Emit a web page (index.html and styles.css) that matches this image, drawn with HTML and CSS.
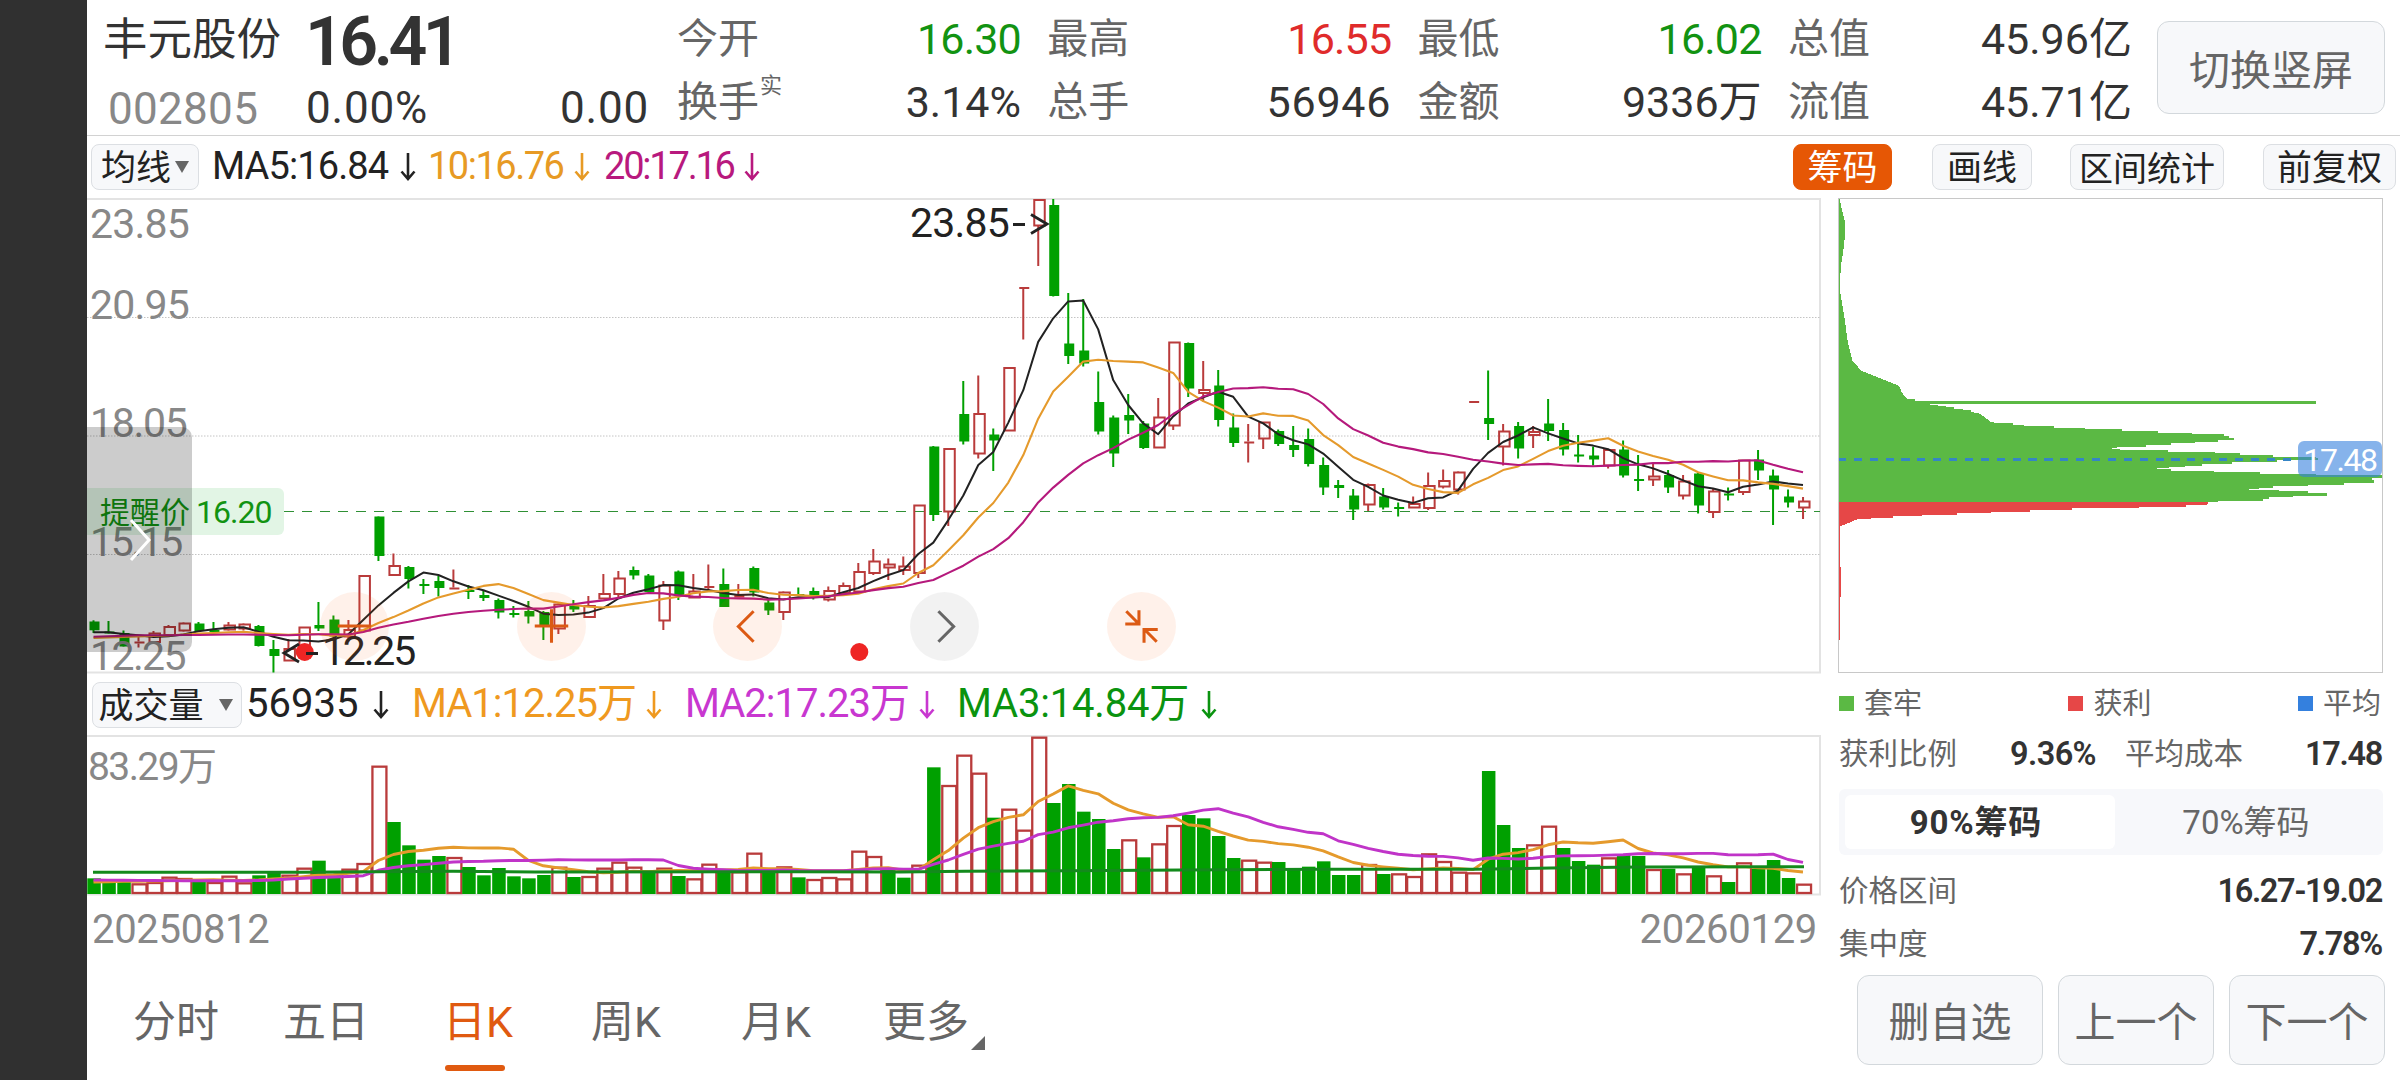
FILE: index.html
```html
<!DOCTYPE html>
<html lang="zh-CN">
<head>
    <meta charset="UTF-8">
    <meta name="viewport" content="width=device-width, initial-scale=1.0">
    <title>丰元股份 002805</title>
    <link rel="stylesheet" href="styles.css">
</head>
<body>
    <svg class="defs" width="0" height="0">
        <symbol id="down" viewBox="0 0 16 28"><path d="M8 0V26M1.5 18.5L8 26L14.5 18.5" fill="none" stroke="currentColor" stroke-width="2.6"/></symbol>
    </svg>

    <div class="side"></div>
    <div class="main">
        <header class="quote">
            <div class="stock">
                <div class="name">丰元股份</div>
                <div class="price">16.41</div>
                <div class="code">002805</div>
                <div class="change"><span>0.00%</span><span>0.00</span></div>
            </div>
            <div class="stats">
                <div class="stat"><label>今开</label><b class="green one">16.30</b></div>
                <div class="stat"><label>最高</label><b class="red one">16.55</b></div>
                <div class="stat"><label>最低</label><b class="green one">16.02</b></div>
                <div class="stat"><label>总值</label><b>45.96亿</b></div>
                <div class="stat"><label>换手<sup>实</sup></label><b>3.14%</b></div>
                <div class="stat"><label>总手</label><b class="wide">56946</b></div>
                <div class="stat"><label>金额</label><b>9336万</b></div>
                <div class="stat"><label>流值</label><b>45.71亿</b></div>
            </div>
            <button class="btn rotate">切换竖屏</button>
        </header>

        <div class="toolbar">
            <button class="chip ma">均线<i class="tri"></i></button>
            <span class="line m5">MA5:16.84<svg><use href="#down"/></svg></span>
            <span class="line m10">10:16.76<svg><use href="#down"/></svg></span>
            <span class="line m20">20:17.16<svg><use href="#down"/></svg></span>
            <div class="tools">
                <button class="chip active">筹码</button>
                <button class="chip draw">画线</button>
                <button class="chip range">区间统计</button>
                <button class="chip adjust">前复权</button>
            </div>
        </div>

        <div class="content">
            <div class="left">
                <div class="kline">
                    <svg id="kline" viewBox="87 198 1735 476" width="1735" height="476"></svg>
                    <span class="axis a1">23.85</span>
                    <span class="axis a2">20.95</span>
                    <span class="axis a3">18.05</span>
                    <span class="axis a4">15.15</span>
                    <span class="axis a5">12.25</span>
                    <span class="mark high">23.85</span>
                    <span class="mark low">12.25</span>
                    <div class="alarm">提醒价<span>16.20</span></div>
                    <div class="drawer"><svg width="22" height="42" viewBox="0 0 22 42"><path d="M2 1L20 21L2 41" fill="none" stroke="#fff" stroke-width="3"/></svg></div>
                    <div class="round r1"><svg viewBox="0 0 68 68"><path d="M17.5 33.5H50.5"/></svg></div>
                    <div class="round r2"><svg viewBox="0 0 68 68"><path d="M17.5 33.5H50.5M34 17V50"/></svg></div>
                    <div class="round r3"><svg viewBox="0 0 68 68"><path d="M40 19L25 34L40 49"/></svg></div>
                    <div class="round r4 gray"><svg viewBox="0 0 68 68"><path d="M28 19L43 34L28 49"/></svg></div>
                    <div class="round r5"><svg viewBox="0 0 68 68"><path d="M19 19L31 31M18 31.5H31.5V18M49 49L37 37M50 37H36.5V50"/></svg></div>
                </div>
                <div class="volbar">
                    <button class="chip vol">成交量<i class="tri"></i></button>
                    <span class="line v0">56935<svg><use href="#down"/></svg></span>
                    <span class="line v1">MA1:12.25万<svg><use href="#down"/></svg></span>
                    <span class="line v2">MA2:17.23万<svg><use href="#down"/></svg></span>
                    <span class="line v3">MA3:14.84万<svg><use href="#down"/></svg></span>
                </div>
                <div class="volume">
                    <svg id="volume" viewBox="87 735 1735 161" width="1735" height="161"></svg>
                    <span class="axis">83.29万</span>
                </div>
                <div class="dates"><span>20250812</span><span>20260129</span></div>
                <nav class="tabs">
                    <a>分时</a>
                    <a>五日</a>
                    <a class="on">日K</a>
                    <a>周K</a>
                    <a>月K</a>
                    <a class="more">更多</a>
                </nav>
            </div>

            <aside class="right">
                <div class="chips">
                    <svg viewBox="51 28 1470 1419" width="544" height="473" preserveAspectRatio="none" shape-rendering="crispEdges">
                        <path class="locked" d="M51 28L53 28L59 62L68 98L66 150L62 190L56 230L53 300L60 345L68 400L75 460L88 515L100 527L108 542L125 549L150 560L190 578L213 588L222 610L235 628H257V633H1341V642H297V645H320V649H341V653H362V657H386V662H408V667L430 671L445 682L461 696L475 700H521V705H551V709H634V714H717V719H816V724H914V729H1007V734H1092V739H1106V744H1119V752H1076V757H1016V761H951V767H881V771H803V775H790V777H813V781H941V786H1068V791H1137V796H1225V801H1341V805H1349V812H1236V818H1114V823H1033V828H989V832H944V836H911V839H949V843H1065V848H1192V853H1341V857H1521V865H1494V870H1498V880H1417V885H1322V890H1227V894H1187V898H1160V900H1241V905H1322V909H1373V918H1280V923H1214V928H1199V933H1076V937H51Z"/>
                        <path class="profit" d="M51 937H1052L1046 946H990V951H864V956H682V962H568V966H463V970H370V975H277V979H198V984H137V989H100L85 996L72 1002L62 1007L54 1008V1120L57 1150V1215L53 1230V1350H51Z"/>
                        <path class="avg" d="M51 808H1292"/>
                    </svg>
                    <span class="tag">17.48</span>
                </div>
                <div class="legend"><span class="g">套牢</span><span class="r">获利</span><span class="b">平均</span></div>
                <div class="pair"><div class="row half">获利比例<b>9.36%</b></div><div class="row">平均成本<b>17.48</b></div></div>
                <div class="switch"><span class="sel">90%筹码</span><span>70%筹码</span></div>
                <div class="row price-range">价格区间<b>16.27-19.02</b></div>
                <div class="row focus">集中度<b>7.78%</b></div>
                <div class="actions">
                    <button class="btn del">删自选</button>
                    <button class="btn">上一个</button>
                    <button class="btn">下一个</button>
                </div>
            </aside>
        </div>
    </div>
    <script src="chart.js"></script>
</body>
</html>
```

FILE: styles.css
```css
* {
    box-sizing: border-box;
}

body {
    margin: 0;
    width: 2400px;
    height: 1080px;
    overflow: hidden;
    display: flex;
    background-color: #fff;
    font-family: Roboto, "Noto Sans CJK SC", sans-serif;
    color: #333;
    white-space: nowrap;
}

.defs {
    position: absolute;
}

.side {
    width: 87px;
    background-color: #303030;
}

.main {
    width: 2313px;
    display: flex;
    flex-direction: column;
}

button {
    font-family: inherit;
    padding: 0;
    margin: 0;
}

b {
    font-weight: normal;
}

.green {
    color: #129312;
}

.red {
    color: #e02b2b;
}

/* quote header */
.quote {
    height: 136px;
    border-bottom: 1px solid #d2d2d2;
    display: flex;
}

.stock {
    width: 590px;
    height: 135px;
    padding-left: 16px;
    display: grid;
    grid-template-columns: 203px 343px;
    grid-template-rows: 76px 59px;
}

.name {
    font-size: 44.5px;
    line-height: 80px;
}

.price {
    font-size: 68px;
    line-height: 84px;
    font-weight: 600;
    letter-spacing: -4.5px;
    margin-left: -1px;
}

.code {
    font-size: 44px;
    line-height: 67px;
    padding-left: 5px;
    letter-spacing: 0.3px;
    color: #888;
}

.change {
    display: flex;
    justify-content: space-between;
    font-size: 44px;
    line-height: 64px;
    letter-spacing: 0.8px;
}

.stats {
    width: 1455px;
    display: grid;
    grid-template-columns: repeat(4, 344px);
    grid-template-rows: 63px 63px;
    column-gap: 26.3px;
    padding-top: 8px;
}

.stat {
    display: flex;
    justify-content: space-between;
    font-size: 43px;
    line-height: 63px;
}

.stat label {
    font-size: 41px;
    color: #666;
}

.stat sup {
    font-size: 22px;
    line-height: 22px;
    position: relative;
    top: -8px;
    left: 1px;
}

.stat .one {
    letter-spacing: -0.8px;
}

.stat .wide {
    letter-spacing: 0.8px;
}

.btn {
    background-color: #f7f8fa;
    border: 1px solid #d3d8dc;
    border-radius: 12px;
    color: #666;
    font-size: 41px;
}

.rotate {
    width: 228px;
    height: 93px;
    margin: 21px 0 0 25px;
    padding-bottom: 2px;
}

/* indicator rows */
.toolbar {
    height: 62px;
    padding: 8px 4px 0;
    display: flex;
}

.chip {
    height: 46px;
    padding-top: 3px;
    background-color: #f7f8fa;
    border: 1px solid #dcdfe3;
    border-radius: 8px;
    color: #222;
    font-size: 35px;
    line-height: 42px;
    display: flex;
    align-items: center;
    justify-content: center;
}

.tri {
    border: 7px solid transparent;
    border-top: 12px solid #666;
    border-bottom: 0;
    margin: -3px 0 0 4px;
}

.ma {
    width: 108px;
}

.line {
    font-size: 38px;
    line-height: 44px;
    height: 44px;
    display: flex;
    align-items: center;
}

.line svg {
    width: 16px;
    height: 28px;
    margin: 2px 0 0 auto;
}

.m5 {
    width: 204px;
    margin-left: 13px;
    color: #222;
    letter-spacing: -0.9px;
}

.m10 {
    width: 162px;
    margin-left: 12px;
    color: #e79a24;
    letter-spacing: -1.5px;
}

.m20 {
    width: 156px;
    margin-left: 14px;
    color: #b8197e;
    letter-spacing: -2.2px;
}

.tools {
    display: flex;
    margin-left: auto;
}

.active {
    width: 99px;
    background-color: #e65705;
    border-color: #e65705;
    color: #fff;
}

.draw {
    width: 100px;
    margin-left: 40px;
}

.range {
    width: 154px;
    margin-left: 38px;
    font-size: 34px;
}

.adjust {
    width: 133px;
    margin-left: 39px;
}

.content {
    display: flex;
}

.left {
    width: 1735px;
}

/* k line chart */
.kline {
    height: 476px;
    position: relative;
}

.kline > svg,
.volume > svg,
.chips > svg {
    display: block;
}

.axis,
.mark {
    position: absolute;
    left: 3px;
    font-size: 41px;
    line-height: 40px;
    color: #888;
    letter-spacing: -0.8px;
}

.a1 { top: 6px; }
.a2 { top: 87px; }
.a3 { top: 205px; letter-spacing: -1.3px; }
.a4 { top: 324px; letter-spacing: -2.4px; }
.a5 { top: 438px; letter-spacing: -1.6px; }

.mark {
    color: #222;
}

.high {
    left: 823px;
    top: 5px;
}

.low {
    left: 235px;
    top: 433px;
    letter-spacing: -2.2px;
}

.alarm {
    position: absolute;
    left: 0;
    top: 290px;
    width: 197px;
    height: 47px;
    padding-left: 13px;
    border-radius: 0 6px 6px 0;
    background-color: rgba(20, 170, 40, 0.12);
    color: #129312;
    font-size: 30px;
    line-height: 49px;
}

.alarm span {
    margin-left: 6px;
    font-size: 32px;
    letter-spacing: -1px;
}

.drawer {
    position: absolute;
    left: 0;
    top: 229px;
    width: 105px;
    height: 225px;
    border-radius: 0 10px 10px 0;
    background-color: rgba(0, 0, 0, 0.2);
    padding: 92px 0 0 42px;
}

.round {
    position: absolute;
    top: 394px;
    width: 69px;
    height: 69px;
    border-radius: 50%;
    background-color: rgba(250, 100, 20, 0.09);
}

.round svg {
    display: block;
    fill: none;
    stroke: #dc5a14;
    stroke-width: 3;
}

.round.gray {
    background-color: rgba(0, 0, 0, 0.05);
}

.gray svg {
    stroke: #666;
}

.r1 { left: 233px; }
.r2 { left: 430px; }
.r3 { left: 626px; }
.r4 { left: 823px; }
.r5 { left: 1020px; }

/* volume chart */
.volbar {
    height: 61px;
    padding: 8px 0 0 5px;
    display: flex;
}

.volbar .line {
    font-size: 40px;
}

.vol {
    width: 150px;
    padding-right: 3px;
}

.vol .tri {
    margin-left: 15px;
}

.v0 {
    width: 143px;
    margin-left: 4px;
    color: #222;
}

.volbar .v1,
.volbar .v2,
.volbar .v3 {
    width: 250px;
    margin-left: 23px;
    color: #ef991f;
    letter-spacing: -1px;
}

.volbar .v2 {
    color: #c837d0;
}

.volbar .v3 {
    width: 260px;
    margin-left: 22px;
    color: #0a930f;
    letter-spacing: -0.2px;
}

.volume {
    height: 161px;
    position: relative;
}

.volume .axis {
    left: 1px;
    top: 12px;
    font-size: 39px;
    letter-spacing: -1.6px;
}

.dates {
    height: 66px;
    width: 1730px;
    padding-left: 5px;
    display: flex;
    justify-content: space-between;
    font-size: 40px;
    line-height: 67px;
    letter-spacing: -0.3px;
    color: #888;
}

.tabs {
    display: flex;
    padding-left: 46px;
    font-size: 43px;
    line-height: 60px;
    color: #666;
    height: 118px;
    padding-top: 30px;
}

.tabs a {
    width: 150px;
}

.tabs a:nth-child(2) { width: 160px; }
.tabs a:nth-child(3) { width: 148px; }
.tabs a:nth-child(5) { width: 142px; }

.tabs .on {
    color: #e05a10;
}

.on::after {
    content: "";
    display: block;
    width: 60px;
    height: 6px;
    margin: 13px 0 0 2px;
    border-radius: 3px;
    background-color: #e05a10;
}

.more::after {
    content: "";
    display: inline-block;
    border-left: 14px solid transparent;
    border-bottom: 14px solid #666;
    margin-left: 2px;
    vertical-align: -13px;
}

/* chip distribution panel */
.right {
    width: 547px;
    margin-left: 16px;
}

.chips {
    width: 545px;
    height: 475px;
    border: 1px solid #c8c8c8;
    position: relative;
}

.chips > svg {
    width: 543px;
}

.locked { fill: #5bb944; }
.profit { fill: #e64747; }

.avg {
    stroke: #3585c5;
    stroke-width: 9;
    stroke-dasharray: 22 21;
    stroke-dashoffset: 3;
}

.tag {
    position: absolute;
    right: 0;
    top: 242px;
    width: 84px;
    height: 36px;
    border-radius: 6px;
    background-color: rgba(53, 128, 222, 0.6);
    color: #fff;
    font-size: 32px;
    line-height: 38px;
    text-align: center;
    letter-spacing: -1.4px;
}

.legend {
    height: 61px;
    width: 543px;
    padding-left: 1px;
    display: flex;
    justify-content: space-between;
    font-size: 29px;
    line-height: 63px;
    color: #666;
}

.legend span::before {
    content: "";
    display: inline-block;
    width: 15px;
    height: 15px;
    margin-right: 10px;
    vertical-align: 3px;
}

.g::before { background-color: #5bb944; }
.r::before { background-color: #e64747; }
.b::before { background-color: #3480de; }

.pair {
    display: flex;
    justify-content: space-between;
    width: 544px;
}

.row {
    display: flex;
    justify-content: space-between;
    width: 544px;
    height: 40px;
    font-size: 29.5px;
    line-height: 41px;
    color: #666;
    padding-left: 1px;
}

.row b {
    font-size: 32.5px;
    font-weight: 600;
    letter-spacing: -1.3px;
    color: #333;
}

.row.half b {
    letter-spacing: -0.6px;
}

.pair .row {
    width: 258px;
}

.switch {
    width: 544px;
    height: 66px;
    margin: 15px 0 0 1px;
    padding: 6px;
    border-radius: 6px;
    background-color: #f7f8fb;
    display: flex;
    font-size: 33px;
    line-height: 56px;
    color: #666;
    text-align: center;
}

.switch span {
    flex: 1;
}

.switch .sel {
    background-color: #fff;
    border-radius: 6px;
    color: #333;
    font-weight: bold;
    padding-right: 8px;
    letter-spacing: 0.8px;
}

.price-range {
    margin-top: 16px;
}

.focus {
    margin-top: 13px;
}

.actions {
    display: flex;
    gap: 15px;
    margin: 11px 0 0 19px;
}

.actions .btn {
    width: 156px;
    height: 90px;
    padding-bottom: 2px;
}

.actions .del {
    width: 186px;
}
```

FILE: chart.js
```js
// [colour, high, body top, body bottom, low]
const candles = [
    ['g', 620.3, 621.5, 630.3, 633], ['g', 621, 631.5, 633, 633.5], ['g', 630.5, 633, 646.5, 646.5], ['r', 637, 641.5, 643.5, 647.5], ['r', 631, 633.5, 642, 642],
    ['r', 625, 627, 635, 635], ['r', 622.5, 623.5, 630.5, 631.5], ['g', 622, 623.5, 631, 631.5], ['g', 622, 630, 631.5, 631.5], ['r', 622, 625.5, 629.5, 630.5],
    ['r', 623.5, 624.5, 628.5, 630.5], ['g', 625, 626, 646, 646.5], ['g', 640, 649, 656, 672.5], ['r', 639, 649, 660.5, 660.5], ['r', 627.5, 627.5, 646, 646],
    ['g', 602, 625, 628.5, 631], ['g', 615.5, 619.5, 636.5, 637], ['r', 620, 630, 636.5, 641.5], ['r', 576, 576, 630.5, 630.5], ['g', 516.5, 516.5, 556, 561],
    ['r', 553.5, 566, 575, 575], ['g', 566, 567, 579, 588.5], ['g', 579, 584, 586, 594], ['g', 576, 581, 588, 596.5], ['r', 569.5, 587.5, 589, 589],
    ['g', 585, 590, 592, 599], ['g', 590, 595, 598, 601], ['g', 598.5, 600, 612.5, 618.5], ['g', 606, 613, 615, 617.5], ['g', 601, 611, 616.5, 623.5],
    ['g', 611, 612, 626.5, 640], ['r', 603.5, 604.5, 628.5, 634], ['g', 600, 606, 609.5, 612], ['r', 596, 606, 617, 617], ['r', 574, 594, 598.5, 598.5],
    ['r', 571, 578.5, 594, 597.5], ['g', 566.5, 570, 575.5, 579.5], ['g', 574, 575.5, 592, 592], ['r', 581, 585.5, 620.5, 630], ['g', 570.5, 571.5, 595, 600],
    ['r', 574, 591.5, 597.5, 597.5], ['r', 564.5, 586, 588, 591], ['g', 568.5, 584, 607, 607], ['r', 584, 595, 597.5, 597.5], ['g', 566.5, 568, 592.5, 596.5],
    ['g', 600, 602.5, 610.5, 615], ['r', 591.5, 592.5, 612, 620], ['g', 587.5, 594, 595.5, 595.5], ['g', 587.5, 591, 595.5, 599.5], ['r', 586.5, 591, 599.5, 601.5],
    ['r', 582.5, 586, 593, 593], ['r', 563, 572, 591.5, 591.5], ['r', 549, 561.5, 573, 575], ['r', 558.5, 564.5, 567.5, 580], ['r', 556.5, 566.5, 570, 575],
    ['r', 505.5, 505.5, 573, 578], ['g', 446, 446.5, 515, 521], ['r', 449, 449, 511.5, 526], ['g', 381, 414, 441.5, 444.5], ['r', 375.5, 414, 453.5, 458.5],
    ['g', 428.5, 434.5, 440.5, 471], ['r', 368, 368, 430.5, 430.5], ['r', 287, 287, 288.5, 339.5], ['r', 200, 200, 225.5, 266], ['g', 199, 205, 296, 296.5],
    ['g', 293, 343.5, 356, 364], ['g', 299, 350.5, 363.5, 366.5], ['g', 371.5, 402, 431.5, 434.5], ['g', 415.5, 417.5, 453.5, 467], ['g', 394, 415, 420.5, 434],
    ['g', 421, 423.5, 448, 449], ['r', 398, 417.5, 447.5, 447.5], ['r', 342.5, 342.5, 425.5, 430], ['g', 342.5, 343, 388.5, 397], ['r', 361, 390, 393, 401.5],
    ['g', 370, 385.5, 420, 426.5], ['g', 413.5, 427.5, 443, 447], ['r', 424, 441.5, 443, 462.5], ['r', 422.5, 422.5, 438.5, 449], ['g', 429.5, 431, 444, 446],
    ['g', 426, 445, 450, 457], ['g', 428.5, 439, 464, 466.5], ['g', 457.5, 465, 487.5, 495], ['g', 480, 485, 488, 498], ['g', 489, 495.5, 509.5, 520],
    ['r', 483.5, 485, 504.5, 511], ['g', 488, 496.5, 507.5, 509.5], ['g', 502.5, 507, 508.5, 516.5], ['r', 496.5, 504, 507.5, 507.5], ['r', 472.5, 486, 508, 510],
    ['r', 469.5, 481, 486.5, 488.5], ['r', 471.5, 472.5, 489.5, 494.5], ['r', 401, 401, 403, 403], ['g', 370.5, 418, 424, 440], ['r', 424, 431.5, 446.5, 465.5],
    ['g', 422, 426, 448.5, 458.5], ['r', 426, 432, 435, 448], ['g', 399, 423.5, 431, 441], ['g', 423, 430, 449.5, 455.5], ['g', 435, 454.5, 456, 462.5],
    ['g', 446.5, 455.5, 459.5, 465.5], ['r', 450, 450, 465.5, 468.5], ['g', 440.5, 449.5, 475.5, 477.5], ['g', 455, 479, 480.5, 491], ['r', 463.5, 476.5, 479.5, 486],
    ['g', 470, 475, 487.5, 493], ['r', 475, 481.5, 495.5, 499.5], ['g', 473, 473.5, 505.5, 513.5], ['r', 489, 491.5, 512, 518], ['g', 487.5, 493.5, 495, 500.5],
    ['r', 460.5, 460.5, 492, 495], ['g', 450, 459.5, 470.5, 480], ['g', 469.5, 475.5, 489.5, 525], ['g', 489.5, 496.5, 502.5, 507.5], ['r', 497, 501.5, 507.5, 519]
];

// colour + bar height in thirds of a pixel
const volumes = ('g47 g36 g36 r32 r36 r52 r48 g38 r36 r55 r35 g56 g64 r58 r79 g100 g58 r76 r93 r385 g216 g146 g103 g114 r111 g81 g56 g78 ' +
    'g53 g47 g57 r82 g51 r54 r79 r97 r82 g70 r79 g54 r47 r91 g69 r68 r124 g72 r83 g50 r45 r51 r47 r130 r114 g72 g49 r88 ' +
    'g380 r327 r418 r364 g229 r256 r193 r472 g273 g330 g247 g225 g135 r164 g110 r152 r207 g237 g227 g174 g108 r103 r97 g96 g72 g82 g98 g57 ' +
    'g57 r90 g60 r62 r54 r122 r99 r67 r65 g369 g207 g138 r149 r205 g138 g99 g88 r110 g118 g114 r75 g76 r62 g79 r56 g36 r95 g75 g102 g48 r31').split(' ');

const X0 = 93.5, STEP = 14.996, BASE = 894;
const RED = '#b93b3b', GREEN = '#00a000';

function average(values, n, start) {
    return values.map((v, i) => {
        if (i < n - 1) return start[Math.min(i, start.length - 1)];
        return values.slice(i - n + 1, i + 1).reduce((a, b) => a + b, 0) / n;
    });
}

function polyline(points, color, width) {
    return `<polyline points="${points.map(p => p.join()).join(' ')}" fill="none" stroke="${color}" stroke-width="${width}" stroke-linejoin="round"/>`;
}

function series(values, color, width) {
    return polyline(values.map((v, i) => [(X0 + i * STEP).toFixed(1), v.toFixed(1)]), color, width);
}

function drawKline() {
    let out = '<rect x="86" y="199" width="1734" height="473.5" fill="none" stroke="#e3e3e3" stroke-width="2"/>';
    [317.5, 436, 554.5].forEach(y => {
        out += `<path d="M87 ${y}H1820" stroke="#c4c4c4" stroke-width="1" stroke-dasharray="1.5 1.5"/>`;
    });
    out += '<path d="M284 511.5H1820" stroke="#2f9035" stroke-width="1" stroke-dasharray="10 8"/>';

    candles.forEach(([c, high, top, bottom, low], i) => {
        const x = X0 + i * STEP;
        const h = bottom - top;
        if (c === 'g') {
            out += `<path d="M${x} ${high}V${low}" stroke="${GREEN}" stroke-width="2"/>`;
            out += `<rect x="${x - 4}" y="${top}" width="10" height="${Math.max(h, 2)}" fill="${GREEN}"/>`;
        } else {
            out += `<path d="M${x} ${high}V${top}M${x} ${bottom}V${low}" stroke="${RED}" stroke-width="2"/>`;
            if (h < 3) out += `<rect x="${x - 4}" y="${top}" width="10" height="${Math.max(h, 2)}" fill="${RED}"/>`;
            else out += `<rect x="${x - 4}" y="${top}" width="10.5" height="${h}" fill="none" stroke="${RED}" stroke-width="2"/>`;
        }
    });

    const close = candles.map(c => c[0] === 'g' ? c[3] : c[2]);
    out += series(average(close, 5, [632.3, 632.3, 634, 635.3]), '#222', 2);
    out += series(average(close, 10, [638, 637.5, 637, 636.5, 636, 635.5, 634.5, 633.5, 633]), '#e59a2c', 2.1);
    out += series(average(close, 20, [636.7, 636.2, 635.8, 635.3, 635.3, 635.2, 635, 635, 634.7, 634.5, 634.5, 634.7, 635, 635.3, 634.8, 634.3, 634.3, 634.5, 632]), '#b5197c', 2.1);

    out += '<circle cx="304.7" cy="652" r="9" fill="#ee2524"/><circle cx="859.3" cy="652" r="9" fill="#ee2524"/>';
    out += '<path d="M299 644L284 653L299 662M306 653.5H318M1013 224.5H1025M1031 214.5L1047 224L1031 233.5" fill="none" stroke="#222" stroke-width="2.8"/>';
    document.getElementById('kline').innerHTML = out;
}

function drawVolume() {
    let out = '<rect x="86" y="736" width="1734" height="158.5" fill="none" stroke="#e3e3e3" stroke-width="2"/>';
    const heights = volumes.map(v => v.slice(1) / 3);
    heights.forEach((h, i) => {
        const x = X0 + 0.8 + i * STEP;
        if (volumes[i][0] === 'g') out += `<rect x="${x - 7}" y="${BASE - h}" width="13.5" height="${h}" fill="${GREEN}"/>`;
        else out += `<rect x="${x - 6.8}" y="${BASE - h + 1}" width="14" height="${h - 2}" fill="#fff" stroke="${RED}" stroke-width="2.3"/>`;
    });

    const tops = heights.map(h => BASE - h);
    out += series(average(tops, 10, [882, 881.7, 881.4, 881.2, 881, 880.7, 880.3, 880, 879.7]), '#e59a2c', 2.9);
    out += series(average(tops, 20, [880, 880.1, 880.2, 880.4, 880.5, 880.6, 880.8, 880.8, 880.8, 880.8, 880.7, 880.5, 880, 879, 878.2, 877.5, 877, 876.5, 875.7]), '#c034c8', 2.9);
    out += polyline([[93, 872.3], [300, 872.3], [453, 871.3], [535, 872], [793, 871.7], [900, 872], [965, 871.3], [1070, 870.7], [1182, 870],
        [1322, 869.3], [1475, 869.3], [1551, 868], [1640, 867], [1804, 866.7]], '#138a1c', 2.9);
    document.getElementById('volume').innerHTML = out;
}

drawKline();
drawVolume();
```
